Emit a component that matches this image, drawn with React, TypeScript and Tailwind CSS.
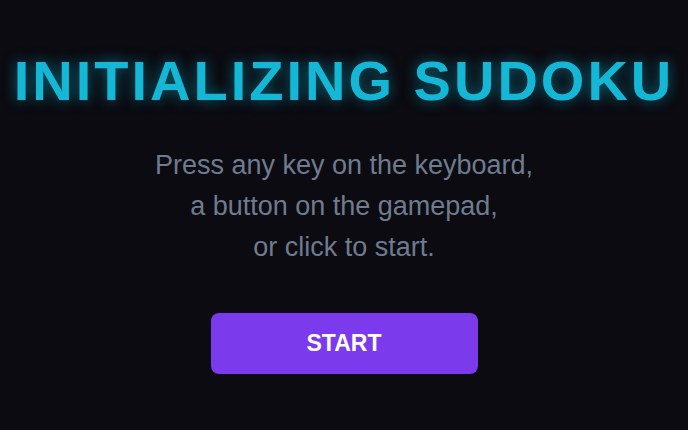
export default function App() {
  return (
    <div className="flex min-h-[430px] w-full flex-col items-center bg-[#0b0b11] pt-[53px] font-['Liberation_Sans',sans-serif]">
      <h1 className="text-[56px] font-bold leading-[56px] tracking-[3px] text-[#14b8d6] [text-shadow:0_0_14px_rgba(6,182,212,0.55)]">
        INITIALIZING SUDOKU
      </h1>

      <p className="mt-[36px] text-center text-[27px] leading-[41px] text-[#6f7b8f]">
        Press any key on the keyboard,
        <br />
        a button on the gamepad,
        <br />
        or click to start.
      </p>

      <button
        type="button"
        className="mt-[45px] flex h-[61px] w-[267px] items-center justify-center rounded-lg bg-[#7c3aed] text-[23px] font-bold text-white"
      >
        START
      </button>
    </div>
  )
}
